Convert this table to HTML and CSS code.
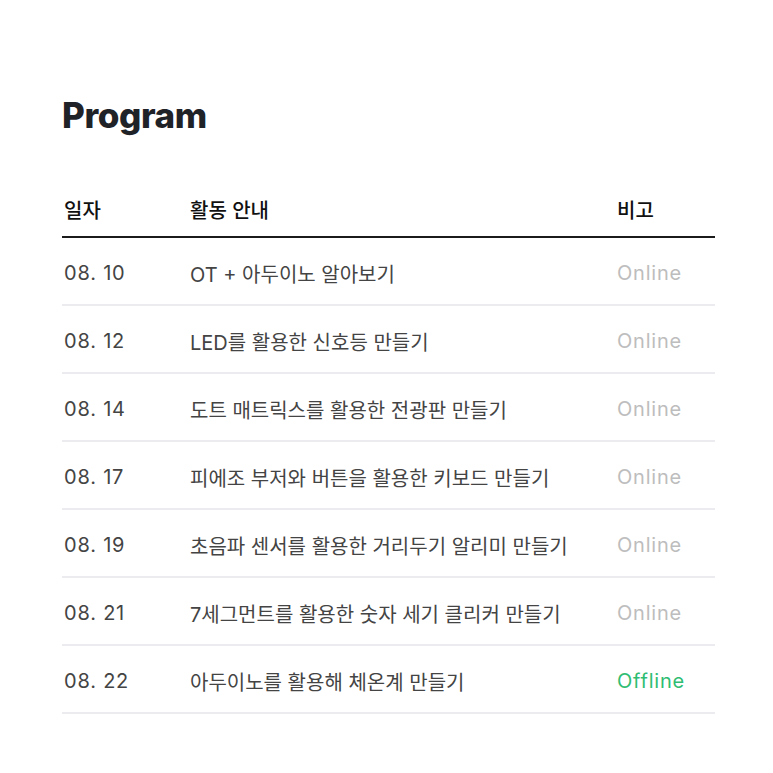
FILE: index.html
```html
<!DOCTYPE html>
<html lang="ko">
<head>
<meta charset="utf-8">
<link rel="stylesheet" href="styles.css">
</head>
<body>
<main class="page">
  <h1 class="title">Program</h1>
  <div class="table">
    <div class="row head">
      <div class="c-date">일자</div>
      <div class="c-act">활동 안내</div>
      <div class="c-note">비고</div>
    </div>
    <div class="row">
      <div class="c-date">08. 10</div>
      <div class="c-act">OT + 아두이노 알아보기</div>
      <div class="c-note online">Online</div>
    </div>
    <div class="row">
      <div class="c-date">08. 12</div>
      <div class="c-act">LED를 활용한 신호등 만들기</div>
      <div class="c-note online">Online</div>
    </div>
    <div class="row">
      <div class="c-date">08. 14</div>
      <div class="c-act">도트 매트릭스를 활용한 전광판 만들기</div>
      <div class="c-note online">Online</div>
    </div>
    <div class="row">
      <div class="c-date">08. 17</div>
      <div class="c-act">피에조 부저와 버튼을 활용한 키보드 만들기</div>
      <div class="c-note online">Online</div>
    </div>
    <div class="row">
      <div class="c-date">08. 19</div>
      <div class="c-act">초음파 센서를 활용한 거리두기 알리미 만들기</div>
      <div class="c-note online">Online</div>
    </div>
    <div class="row">
      <div class="c-date">08. 21</div>
      <div class="c-act">7세그먼트를 활용한 숫자 세기 클리커 만들기</div>
      <div class="c-note online">Online</div>
    </div>
    <div class="row">
      <div class="c-date">08. 22</div>
      <div class="c-act">아두이노를 활용해 체온계 만들기</div>
      <div class="c-note offline">Offline</div>
    </div>
  </div>
</main>
</body>
</html>
```
FILE: styles.css
```css
* { box-sizing: border-box; }
html, body { margin: 0; padding: 0; background: #fff; }
body {
  font-family: Inter, "Noto Sans CJK KR", sans-serif;
  color: #333;
}
.page {
  width: 773px;
  padding: 94px 58px 0 62px;
}
.title {
  margin: 0;
  font-family: Inter, sans-serif;
  font-weight: 800;
  font-size: 35px;
  line-height: 42px;
  letter-spacing: -0.4px;
  color: #1f2328;
}
.table {
  margin-top: 59px;
  width: 653px;
}
.row {
  display: grid;
  grid-template-columns: 128px 427px 98px;
  align-items: center;
  height: 68px;
  padding-top: 4px;
  border-bottom: 2px solid #ececf0;
  font-size: 20px;
  color: #444;
}
.row.head {
  height: 43px;
  padding-top: 0;
  align-items: start;
  border-bottom: 2px solid #1b1b1b;
  font-weight: 500;
  color: #111;
  font-size: 20px;
}
.c-date { padding-left: 2px; }
.c-date, .c-note { letter-spacing: 0.8px; }
.row.head .c-date, .row.head .c-note { letter-spacing: 0; }
.online { color: #bdbdbd; }
.offline { color: #2fbd73; }
```
